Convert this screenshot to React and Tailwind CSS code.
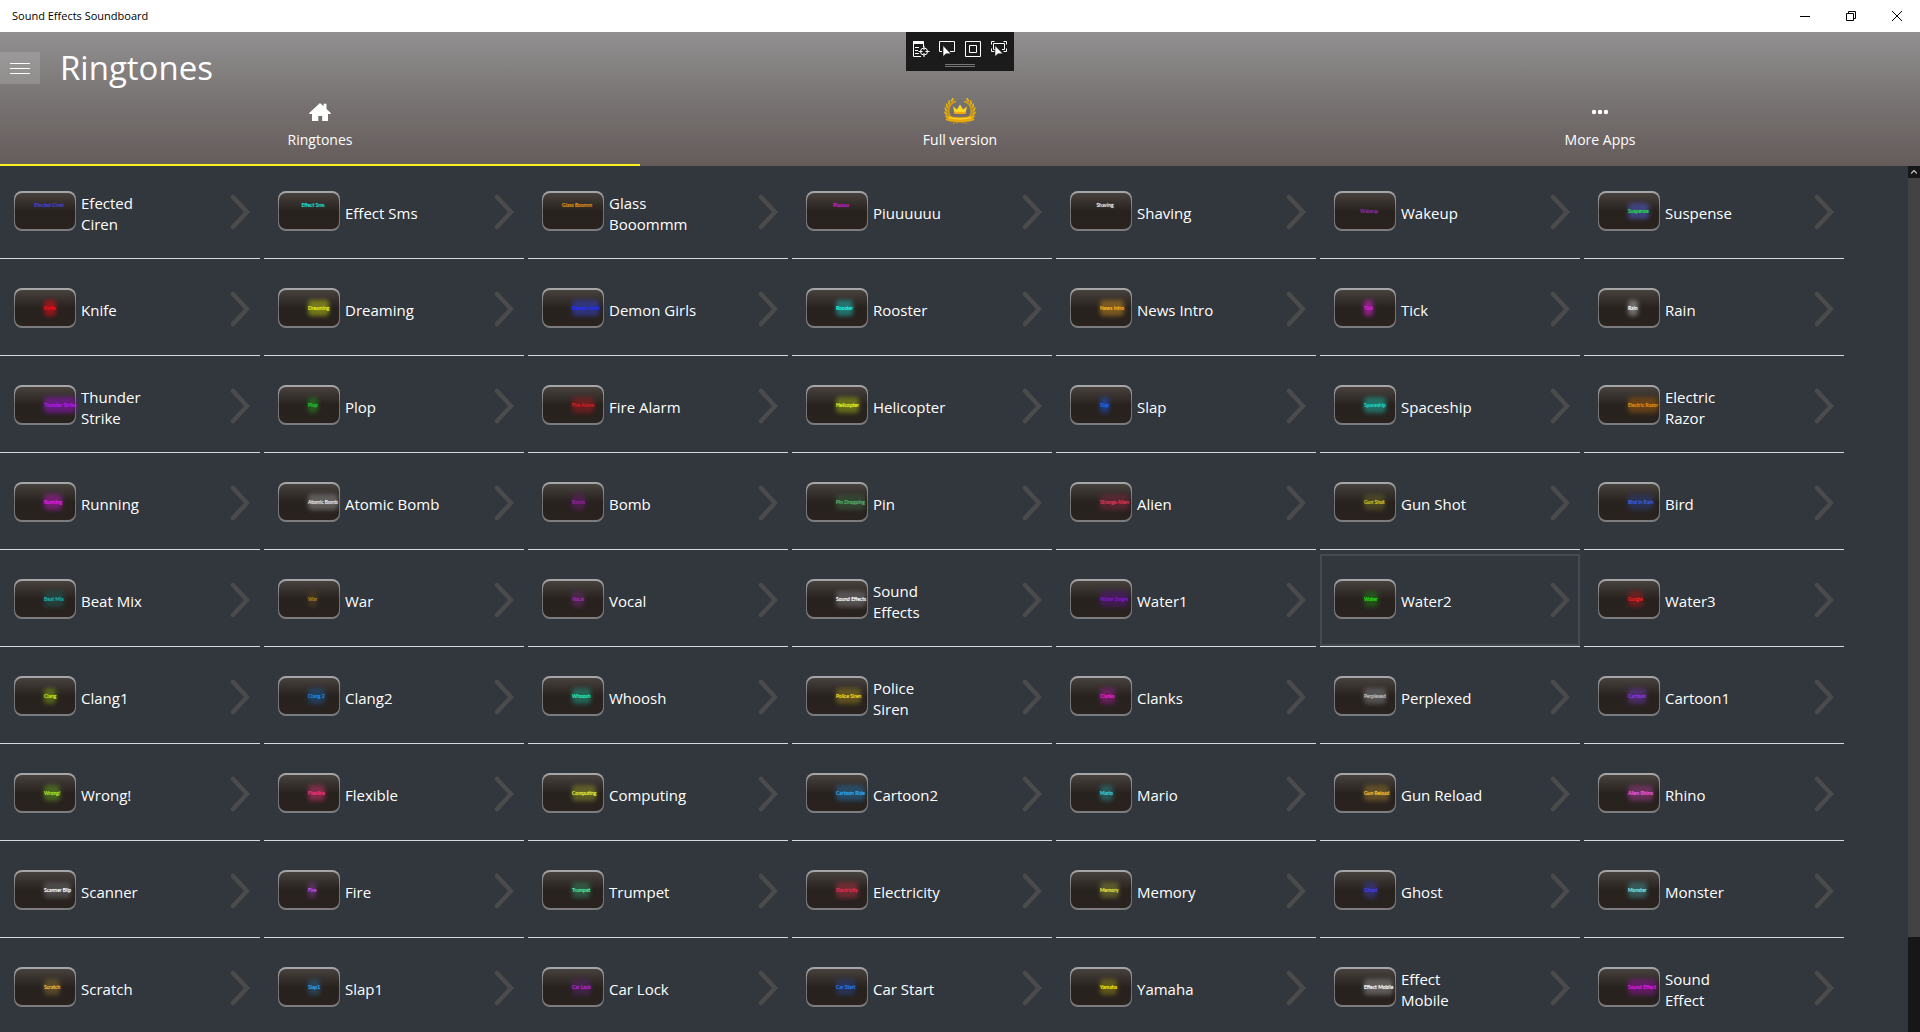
import { useState } from 'react';

const SOUNDS = [
  { name: 'Efected\nCiren', tag: 'Efected Ciren', color: 'text-[#4540d8]', place: 'top' },
  { name: 'Effect Sms', tag: 'Effect Sms', color: 'text-[#1ce0d0]', place: 'top' },
  { name: 'Glass\nBooommm', tag: 'Glass Boomm', color: 'text-[#e09414]', place: 'top' },
  { name: 'Piuuuuuu', tag: 'Piuuuu', color: 'text-[#d020d4]', place: 'top' },
  { name: 'Shaving', tag: 'Shaving', color: 'text-[#f0f0f0]', place: 'top' },
  { name: 'Wakeup', tag: 'Wakeup', color: 'text-[#8a2ca0]', place: 'middle' },
  { name: 'Suspense', tag: 'Suspense', color: 'text-[#1fe04c]', glow: 'bg-[#4a50a8]/70' },
  { name: 'Knife', tag: 'Knife', color: 'text-[#f0101c]', glow: 'bg-[#c01018]/70' },
  { name: 'Dreaming', tag: 'Dreaming', color: 'text-[#e8ee1c]', glow: 'bg-[#a8b018]/60' },
  { name: 'Demon Girls', tag: 'Demon Girls', color: 'text-[#2630ff]', glow: 'bg-[#3440b8]/60' },
  { name: 'Rooster', tag: 'Rooster', color: 'text-[#20f0e8]', glow: 'bg-[#20a8a0]/60' },
  { name: 'News Intro', tag: 'News Intro', color: 'text-[#ffb020]', glow: 'bg-[#b07c20]/60' },
  { name: 'Tick', tag: 'Tick', color: 'text-[#e020e0]', glow: 'bg-[#c020b8]/70' },
  { name: 'Rain', tag: 'Rain', color: 'text-[#ffffff]', glow: 'bg-[#a0a0a0]/60' },
  { name: 'Thunder\nStrike', tag: 'Thunder Strike', color: 'text-[#b41cf0]', glow: 'bg-[#8c18b8]/60' },
  { name: 'Plop', tag: 'Plop', color: 'text-[#20c828]', glow: 'bg-[#208020]/60' },
  { name: 'Fire Alarm', tag: 'Fire Alarm', color: 'text-[#d81c24]', glow: 'bg-[#901c20]/60' },
  { name: 'Helicopter', tag: 'Helicopter', color: 'text-[#e8f828]', glow: 'bg-[#8c9c18]/60' },
  { name: 'Slap', tag: 'Slap', color: 'text-[#1c68f8]', glow: 'bg-[#1c50c0]/60' },
  { name: 'Spaceship', tag: 'Spaceship', color: 'text-[#1cdcc4]', glow: 'bg-[#1c9c8c]/60' },
  { name: 'Electric\nRazor', tag: 'Electric Razor', color: 'text-[#e89010]', glow: 'bg-[#885410]/60' },
  { name: 'Running', tag: 'Running', color: 'text-[#e81ce8]', glow: 'bg-[#a01ca0]/60' },
  { name: 'Atomic Bomb', tag: 'Atomic Bomb', color: 'text-[#e8e8e8]', glow: 'bg-[#808080]/60' },
  { name: 'Bomb', tag: 'Bomb', color: 'text-[#90249c]', glow: 'bg-[#601c68]/60' },
  { name: 'Pin', tag: 'Pin Dropping', color: 'text-[#5cb46c]', glow: 'bg-[#38583c]/60' },
  { name: 'Alien', tag: 'Strange Alien', color: 'text-[#e03454]', glow: 'bg-[#702838]/60' },
  { name: 'Gun Shot', tag: 'Gun Shot', color: 'text-[#d4cc28]', glow: 'bg-[#5c5824]/60' },
  { name: 'Bird', tag: 'Bird In Rain', color: 'text-[#3c60e0]', glow: 'bg-[#2c3c70]/60' },
  { name: 'Beat Mix', tag: 'Beat Mix', color: 'text-[#1cb0a8]', glow: 'bg-[#205450]/60' },
  { name: 'War', tag: 'War', color: 'text-[#b08418]', glow: 'bg-[#504020]/60' },
  { name: 'Vocal', tag: 'Vocal', color: 'text-[#a828b0]', glow: 'bg-[#602868]/60' },
  { name: 'Sound\nEffects', tag: 'Sound Effects', color: 'text-[#ffffff]', glow: 'bg-[#707070]/60' },
  { name: 'Water1', tag: 'Water Single', color: 'text-[#7c1cc8]', glow: 'bg-[#541878]/60' },
  { name: 'Water2', tag: 'Water', color: 'text-[#28e018]', glow: 'bg-[#207018]/60' },
  { name: 'Water3', tag: 'Gurgle', color: 'text-[#f81c1c]', glow: 'bg-[#901c1c]/60' },
  { name: 'Clang1', tag: 'Clang', color: 'text-[#c8f018]', glow: 'bg-[#708c18]/60' },
  { name: 'Clang2', tag: 'Clang 2', color: 'text-[#1c8cf0]', glow: 'bg-[#1c5080]/60' },
  { name: 'Whoosh', tag: 'Whoosh', color: 'text-[#28f0bc]', glow: 'bg-[#208c74]/60' },
  { name: 'Police\nSiren', tag: 'Police Siren', color: 'text-[#f8d820]', glow: 'bg-[#807020]/60' },
  { name: 'Clanks', tag: 'Clanks', color: 'text-[#f020d8]', glow: 'bg-[#901c84]/60' },
  { name: 'Perplexed', tag: 'Perplexed', color: 'text-[#c0c0c0]', glow: 'bg-[#707070]/60' },
  { name: 'Cartoon1', tag: 'Cartoon', color: 'text-[#8c38e8]', glow: 'bg-[#603494]/60' },
  { name: 'Wrong!', tag: 'Wrong!', color: 'text-[#a8f028]', glow: 'bg-[#5c8c20]/60' },
  { name: 'Flexible', tag: 'Flexible', color: 'text-[#f83078]', glow: 'bg-[#b03060]/60' },
  { name: 'Computing', tag: 'Computing', color: 'text-[#e8f038]', glow: 'bg-[#80842c]/60' },
  { name: 'Cartoon2', tag: 'Cartoon Ride', color: 'text-[#2cacf4]', glow: 'bg-[#246490]/60' },
  { name: 'Mario', tag: 'Mario', color: 'text-[#38d8e0]', glow: 'bg-[#28787c]/60' },
  { name: 'Gun Reload', tag: 'Gun Reload', color: 'text-[#ffc038]', glow: 'bg-[#84682c]/60' },
  { name: 'Rhino', tag: 'Alien Rhino', color: 'text-[#f858d8]', glow: 'bg-[#8c387c]/60' },
  { name: 'Scanner', tag: 'Scanner Blip', color: 'text-[#ffffff]', glow: 'bg-[#606060]/60' },
  { name: 'Fire', tag: 'Fire', color: 'text-[#d050f0]', glow: 'bg-[#703884]/60' },
  { name: 'Trumpet', tag: 'Trumpet', color: 'text-[#50e89c]', glow: 'bg-[#347454]/60' },
  { name: 'Electricity', tag: 'Electricity', color: 'text-[#e82c50]', glow: 'bg-[#983040]/60' },
  { name: 'Memory', tag: 'Memory', color: 'text-[#e8e840]', glow: 'bg-[#787830]/60' },
  { name: 'Ghost', tag: 'Ghost', color: 'text-[#4440f8]', glow: 'bg-[#383894]/60' },
  { name: 'Monster', tag: 'Monster', color: 'text-[#78e8e8]', glow: 'bg-[#3c7c7c]/60' },
  { name: 'Scratch', tag: 'Scratch', color: 'text-[#f0c048]', glow: 'bg-[#74602c]/60' },
  { name: 'Slap1', tag: 'Slap1', color: 'text-[#30a8f0]', glow: 'bg-[#285878]/60' },
  { name: 'Car Lock', tag: 'Car Lock', color: 'text-[#c824d8]', glow: 'bg-[#542460]/60' },
  { name: 'Car Start', tag: 'Car Start', color: 'text-[#287cf8]', glow: 'bg-[#24407c]/60' },
  { name: 'Yamaha', tag: 'Yamaha', color: 'text-[#fff010]', glow: 'bg-[#807818]/60' },
  { name: 'Effect\nMobile', tag: 'Effect Mobile', color: 'text-[#ffffff]', glow: 'bg-[#808080]/60' },
  { name: 'Sound\nEffect', tag: 'Sound Effect', color: 'text-[#dc1ce4]', glow: 'bg-[#84188c]/60' },
];

function HomeIcon() {
  return (
    <svg width="22" height="18" viewBox="0 0 22 18" fill="#fff" aria-hidden="true">
      <path d="M11 0 14.5 3.2V.8h3v5.1L21.8 10v1H19v7h-5.8v-5H9.3v5H3v-7H.2v-1z" />
    </svg>
  );
}

const LEAVES = [0, 1, 2, 3, 4, 5, 6];

// left half of the wreath, leaves pointing up along the branch
function LaurelBranch() {
  return (
    <g>
      <path d="M12 1C3 5 1 16 9 23" fill="none" stroke="#b98507" strokeWidth=".8" />
      {LEAVES.map((i) => {
        const deg = 236 - i * 17;
        const a = (deg * Math.PI) / 180;
        const x = 17 + Math.cos(a) * 13;
        const y = 13 + Math.sin(a) * 12;
        return (
          <g key={i} transform={`translate(${x} ${y}) rotate(${deg + 90})`}>
            <ellipse cx="1" cy="-1" rx="2.4" ry=".9" transform="rotate(-28)" fill="#e9b50f" />
            <ellipse cx="1" cy="1" rx="2.4" ry=".9" transform="rotate(28)" fill="#d7a20b" />
          </g>
        );
      })}
    </g>
  );
}

function CrownIcon() {
  return (
    <svg width="34" height="28" viewBox="0 0 34 28" aria-hidden="true">
      <LaurelBranch />
      <g transform="translate(34 0) scale(-1 1)">
        <LaurelBranch />
      </g>
      <path d="M11.5 15 10 8.5l4 3 3-5 3 5 4-3-1.5 6.5z" fill="#ffd61f" />
      <path d="M11.5 14h11v2h-11z" fill="#f3a90b" />
      <path d="M3 17c9 3 19 3 28 0l-1 2.5 1.5 2.5c-9 3-20 3-29 0L4 19.5z" fill="#e6a70b" />
      <path d="M6 19.5c7 2 15 2 22 0" fill="none" stroke="#ffdb3a" />
      <path d="M10 25.5l7-1.5 7 1.5" fill="none" stroke="#d39c0a" strokeDasharray="2 1" />
    </svg>
  );
}

function DotsIcon() {
  return (
    <svg width="18" height="6" viewBox="0 0 18 6" fill="#fff" aria-hidden="true">
      <circle cx="3" cy="3" r="2.2" />
      <circle cx="9" cy="3" r="2.2" />
      <circle cx="15" cy="3" r="2.2" />
    </svg>
  );
}

function Pointer() {
  return <path d="M4 4.5v11l3-2.7h5z" fill="#fff" stroke="#1b1b1b" strokeWidth=".6" />;
}

const DEBUG_TOOLS = [
  {
    label: 'Go to Live Visual Tree',
    art: (
      <>
        <path d="M0 0h11v3H0z" fill="#fff" stroke="none" />
        <path d="M.5 3v12.5H8M10.5 3v3M2 6.5h4M2 9.5h3M2 12.5h4" />
        <circle cx="11" cy="10.5" r="3.5" />
        <path d="M11 5v4M11 12v4M5.5 10.5h4M12.5 10.5h4" />
      </>
    ),
  },
  {
    label: 'Enable selection',
    art: (
      <>
        <path d="M3 10.5H.5v-10h15v10H11" />
        <Pointer />
      </>
    ),
  },
  {
    label: 'Display layout adorners',
    art: (
      <>
        <path d="M.5.5h15v15H.5z" />
        <path d="M4.5 4.5h7v7h-7z" />
      </>
    ),
  },
  {
    label: 'Track focused element',
    art: (
      <>
        <path d="M.5 3.5v-3h3M12.5.5h3v3M15.5 7.5v3h-3M.5 7.5v3h3" />
        <path d="M5 8.5H2.5v-6h11v6H11" />
        <Pointer />
      </>
    ),
  },
];

function DebugBar() {
  return (
    <div className="absolute top-0 left-1/2 -translate-x-1/2 bg-[#1b1b1b] px-[7px] pt-[9px] pb-1">
      <div className="flex gap-2.5">
        {DEBUG_TOOLS.map((tool) => (
          <button key={tool.label} type="button" aria-label={tool.label} className="block">
            <svg width="16" height="16" viewBox="0 0 16 16" fill="none" stroke="#fff" className="overflow-visible">
              {tool.art}
            </svg>
          </button>
        ))}
      </div>
      <div className="mx-auto mt-[7px] h-[3px] w-[30px] border-y border-[#777]" />
    </div>
  );
}

function TitleBar() {
  return (
    <div className="flex h-8 shrink-0 items-center justify-between bg-white">
      <span className="pl-3 text-[11px] text-black">Sound Effects Soundboard</span>
      <div className="flex h-full">
        <button type="button" aria-label="Minimize" className="flex w-[46px] items-center justify-center">
          <svg width="10" height="10" viewBox="0 0 10 10" stroke="#000"><path d="M0 5.5h10" /></svg>
        </button>
        <button type="button" aria-label="Restore" className="flex w-[46px] items-center justify-center">
          <svg width="10" height="10" viewBox="0 0 10 10" fill="none" stroke="#000">
            <path d="M.5 2.5h7v7h-7zM2.5 2.5v-2h7v7h-2" />
          </svg>
        </button>
        <button type="button" aria-label="Close" className="flex w-[46px] items-center justify-center">
          <svg width="10" height="10" viewBox="0 0 10 10" stroke="#000"><path d="M0 0l10 10M10 0L0 10" /></svg>
        </button>
      </div>
    </div>
  );
}

const TABS = [
  { label: 'Ringtones', icon: <HomeIcon /> },
  { label: 'Full version', icon: <CrownIcon /> },
  { label: 'More Apps', icon: <DotsIcon /> },
];

function Header() {
  const [active, setActive] = useState('Ringtones');

  return (
    <header className="relative flex h-[134px] shrink-0 flex-col bg-linear-to-b from-[#929091] via-[#787473] to-[#655b5b]">
      <div className="flex h-16 items-center gap-5 pt-2">
        <button type="button" aria-label="Menu" className="flex h-8 w-10 flex-col items-center justify-center gap-1 bg-white/15">
          <span className="h-px w-5 bg-white" />
          <span className="h-px w-5 bg-white" />
          <span className="h-px w-5 bg-white" />
        </button>
        <h1 className="text-[33px] leading-10 text-white">Ringtones</h1>
      </div>
      <nav className="grid flex-1 grid-cols-3">
        {TABS.map((tab) => (
          <button
            key={tab.label}
            type="button"
            onClick={() => setActive(tab.label)}
            className={`flex flex-col items-center border-b-2 text-sm text-white ${active === tab.label ? 'border-[#fbf41c]' : 'border-transparent'}`}
          >
            <span className="flex h-8 items-center">{tab.icon}</span>
            <span className="pt-0.5">{tab.label}</span>
          </button>
        ))}
      </nav>
      <DebugBar />
    </header>
  );
}

function Pad({ sound }) {
  const centered = sound.place === 'top' || sound.place === 'middle';
  return (
    <span className="mb-0.5 h-10 w-[62px] shrink-0 rounded-lg bg-linear-to-b from-[#a9a9ab] via-[#6f6c6c] to-[#7d7d7f] px-px py-[2px]">
      <span
        className={`flex h-full rounded-[7px] bg-linear-to-b from-[#48423f] from-0% via-[#28221f] via-50% to-[#29221f] to-100% ${centered ? 'justify-center pl-2' : 'pl-[29px]'} ${sound.place === 'top' ? 'items-start pt-1.5' : 'items-center'}`}
      >
        <span className={`relative font-['Lato','Liberation_Sans',sans-serif] text-[5px] leading-3 whitespace-nowrap ${sound.color}`}>
          {sound.glow && <span className={`absolute inset-x-0 -inset-y-0.5 rounded-sm blur-[2px] ${sound.glow}`} />}
          <span className="relative [text-shadow:0_0_1px_currentColor]">{sound.tag}</span>
        </span>
      </span>
    </span>
  );
}

function SoundTile({ sound, selected }) {
  return (
    <li className="h-[93px] border-b border-[#d5d9e2]">
      <button
        type="button"
        className={`flex h-full w-full items-center pr-2.5 pl-3.5 text-left ${selected ? 'outline-2 -outline-offset-2 outline-[#454951]' : ''}`}
      >
        <Pad sound={sound} />
        <span className="ml-[5px] flex-1 pt-[3px] text-[15px] leading-[21px] whitespace-pre-line text-white">{sound.name}</span>
        <svg width="20" height="36" viewBox="0 0 20 36" fill="none" stroke="#4b4b4c" strokeWidth="4.5" strokeLinecap="round" aria-hidden="true">
          <path d="M3 3l14 15L3 33" />
        </svg>
      </button>
    </li>
  );
}

function ScrollBar() {
  return (
    <div className="flex w-3 shrink-0 flex-col bg-[#171717]">
      <button type="button" aria-label="Scroll up" className="flex h-3 w-3 shrink-0 items-center justify-center">
        <svg width="6" height="4" viewBox="0 0 6 4" fill="none" stroke="#c8c8c8" strokeWidth="1.2">
          <path d="M0 3.5l3-3 3 3" />
        </svg>
      </button>
      <div className="min-h-0 flex-1">
        <div className="h-8/9 bg-[#434343]" />
      </div>
    </div>
  );
}

export default function App() {
  return (
    <div className="flex h-screen flex-col overflow-hidden bg-[#32363d] font-['Open_Sans','Noto_Sans',sans-serif]">
      <TitleBar />
      <Header />
      <main className="flex min-h-0 flex-1">
        <ul className="grid flex-1 grid-cols-[repeat(auto-fill,260px)] content-start gap-1">
          {SOUNDS.map((sound) => (
            <SoundTile key={sound.name} sound={sound} selected={sound.name === 'Water2'} />
          ))}
        </ul>
        <ScrollBar />
      </main>
    </div>
  );
}
